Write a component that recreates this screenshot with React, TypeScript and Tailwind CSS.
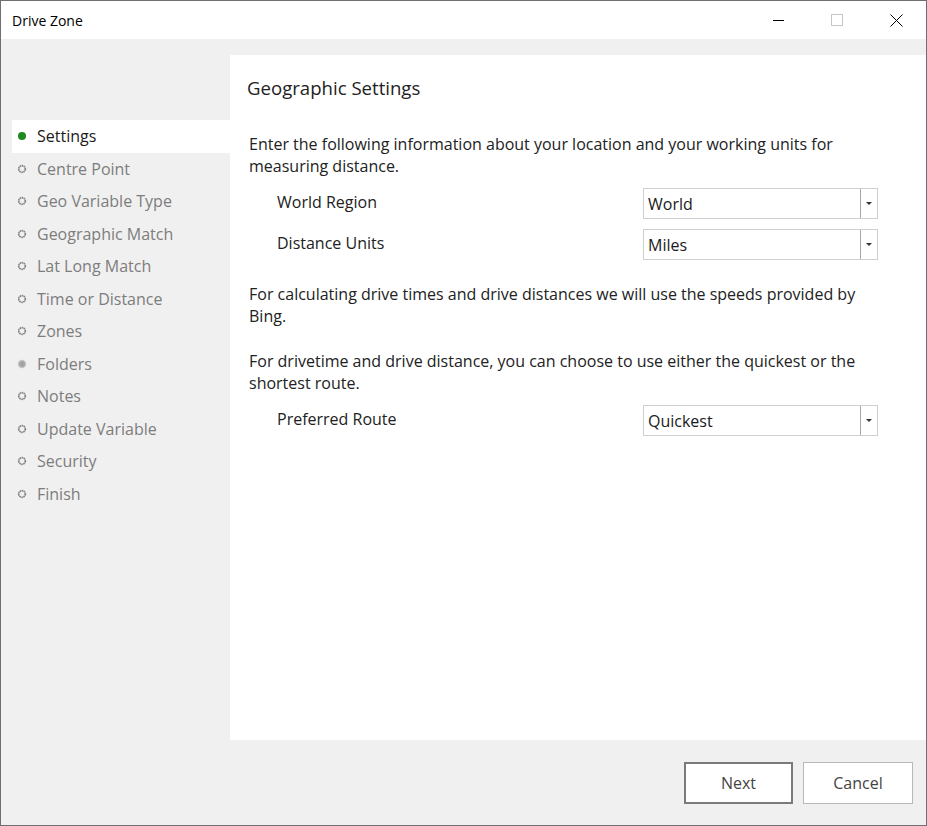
import React from "react";

const font = { fontFamily: '"Open Sans", "Noto Sans", sans-serif' };

type Step = { label: string; state: "active" | "todo" | "partial" };

const steps: Step[] = [
  { label: "Settings", state: "active" },
  { label: "Centre Point", state: "todo" },
  { label: "Geo Variable Type", state: "todo" },
  { label: "Geographic Match", state: "todo" },
  { label: "Lat Long Match", state: "todo" },
  { label: "Time or Distance", state: "todo" },
  { label: "Zones", state: "todo" },
  { label: "Folders", state: "partial" },
  { label: "Notes", state: "todo" },
  { label: "Update Variable", state: "todo" },
  { label: "Security", state: "todo" },
  { label: "Finish", state: "todo" },
];

function Bullet({ state }: { state: Step["state"] }) {
  if (state === "active") {
    return <span className="inline-block h-[8px] w-[8px] rounded-full bg-[#1e8a1e]" />;
  }
  if (state === "partial") {
    return (
      <svg width="10" height="10" viewBox="0 0 10 10">
        <circle cx="5" cy="5" r="3.6" fill="#a4a4a4" stroke="#c6c6c6" strokeWidth="1.2" />
      </svg>
    );
  }
  return (
    <svg width="10" height="10" viewBox="0 0 10 10">
      <circle cx="5" cy="5" r="3.3" fill="none" stroke="#858585" strokeWidth="1.7" strokeDasharray="1.6 0.5" />
    </svg>
  );
}

function Dropdown({ value }: { value: string }) {
  return (
    <div className="flex h-[31px] w-[235px] border border-[#cfcfcf] bg-white">
      <div className="flex flex-1 items-center pl-[4px] text-[16px] text-[#1a1a1a]">{value}</div>
      <div className="flex w-[17px] items-center justify-center border-l border-[#a6a6a6]">
        <span className="h-0 w-0 border-x-[3px] border-t-[3px] border-x-transparent border-t-[#333]" />
      </div>
    </div>
  );
}

function FieldRow({ label, value }: { label: string; value: string }) {
  return (
    <div className="flex items-center justify-between pl-[28px] pr-[48px]">
      <span className="mb-[4px] text-[16px] text-[#222]">{label}</span>
      <Dropdown value={value} />
    </div>
  );
}

export default function App() {
  return (
    <div
      className="flex h-[826px] w-[927px] flex-col border border-[#6f6f6f] bg-white"
      style={font}
    >
      {/* Title bar */}
      <div className="flex h-[38px] shrink-0 items-center justify-between bg-white">
        <span className="pl-[11px] text-[14px] text-black">Drive Zone</span>
        <div className="flex h-full items-center">
          <div className="flex h-full w-[59px] items-center justify-center">
            <span className="block h-px w-[11px] bg-black" />
          </div>
          <div className="flex h-full w-[59px] items-center justify-center pr-[2px]">
            <span className="block h-[12px] w-[12px] border border-[#c4c4c4]" />
          </div>
          <div className="flex h-full w-[59px] items-center justify-center">
            <svg width="13" height="13" viewBox="0 0 13 13">
              <path d="M0.5 0.5 L12.5 12.5 M12.5 0.5 L0.5 12.5" stroke="#000" strokeWidth="1" />
            </svg>
          </div>
        </div>
      </div>

      {/* Body */}
      <div className="flex flex-1 flex-col bg-[#f0f0f0]">
        <div className="flex flex-1 pt-[16px]">
          {/* Nav */}
          <nav className="w-[229px] shrink-0 pl-[11px] pt-[65px]">
            {steps.map((s) => (
              <div
                key={s.label}
                className={
                  s.state === "active"
                    ? "flex h-[32.5px] items-center gap-[10px] bg-white pl-[5px] text-[16px] text-[#1a1a1a]"
                    : "flex h-[32.5px] items-center gap-[10px] pl-[5px] text-[16px] text-[#7d7d7d]"
                }
              >
                <span className="flex w-[10px] justify-center">
                  <Bullet state={s.state} />
                </span>
                <span>{s.label}</span>
              </div>
            ))}
          </nav>

          {/* Content */}
          <main className="flex-1 bg-white pl-[17px] pt-[20px]">
            <h1 className="text-[18.6px] leading-[26px] text-[#222]">Geographic Settings</h1>
            <div className="mt-[32px] pl-[2px] text-[16px] leading-[22px] text-[#222]">
              <p className="pr-[50px]">
                Enter the following information about your location and your working units for measuring distance.
              </p>
              <div className="mt-[11px] flex flex-col gap-[10px]">
                <FieldRow label="World Region" value="World" />
                <FieldRow label="Distance Units" value="Miles" />
              </div>
              <p className="mt-[23px] pr-[50px]">
                For calculating drive times and drive distances we will use the speeds provided by Bing.
              </p>
              <p className="mt-[23px] pr-[50px]">
                For drivetime and drive distance, you can choose to use either the quickest or the shortest route.
              </p>
              <div className="mt-[11px]">
                <FieldRow label="Preferred Route" value="Quickest" />
              </div>
            </div>
          </main>
        </div>

        {/* Footer */}
        <div className="flex h-[85px] shrink-0 items-center justify-end gap-[10px] pr-[13px]">
          <button className="h-[42px] w-[109px] border-2 border-[#7a7a7a] bg-white text-[16px] text-[#444]">
            Next
          </button>
          <button className="h-[42px] w-[110px] border border-[#b8b8b8] bg-white text-[16px] text-[#444]">
            Cancel
          </button>
        </div>
      </div>
    </div>
  );
}
